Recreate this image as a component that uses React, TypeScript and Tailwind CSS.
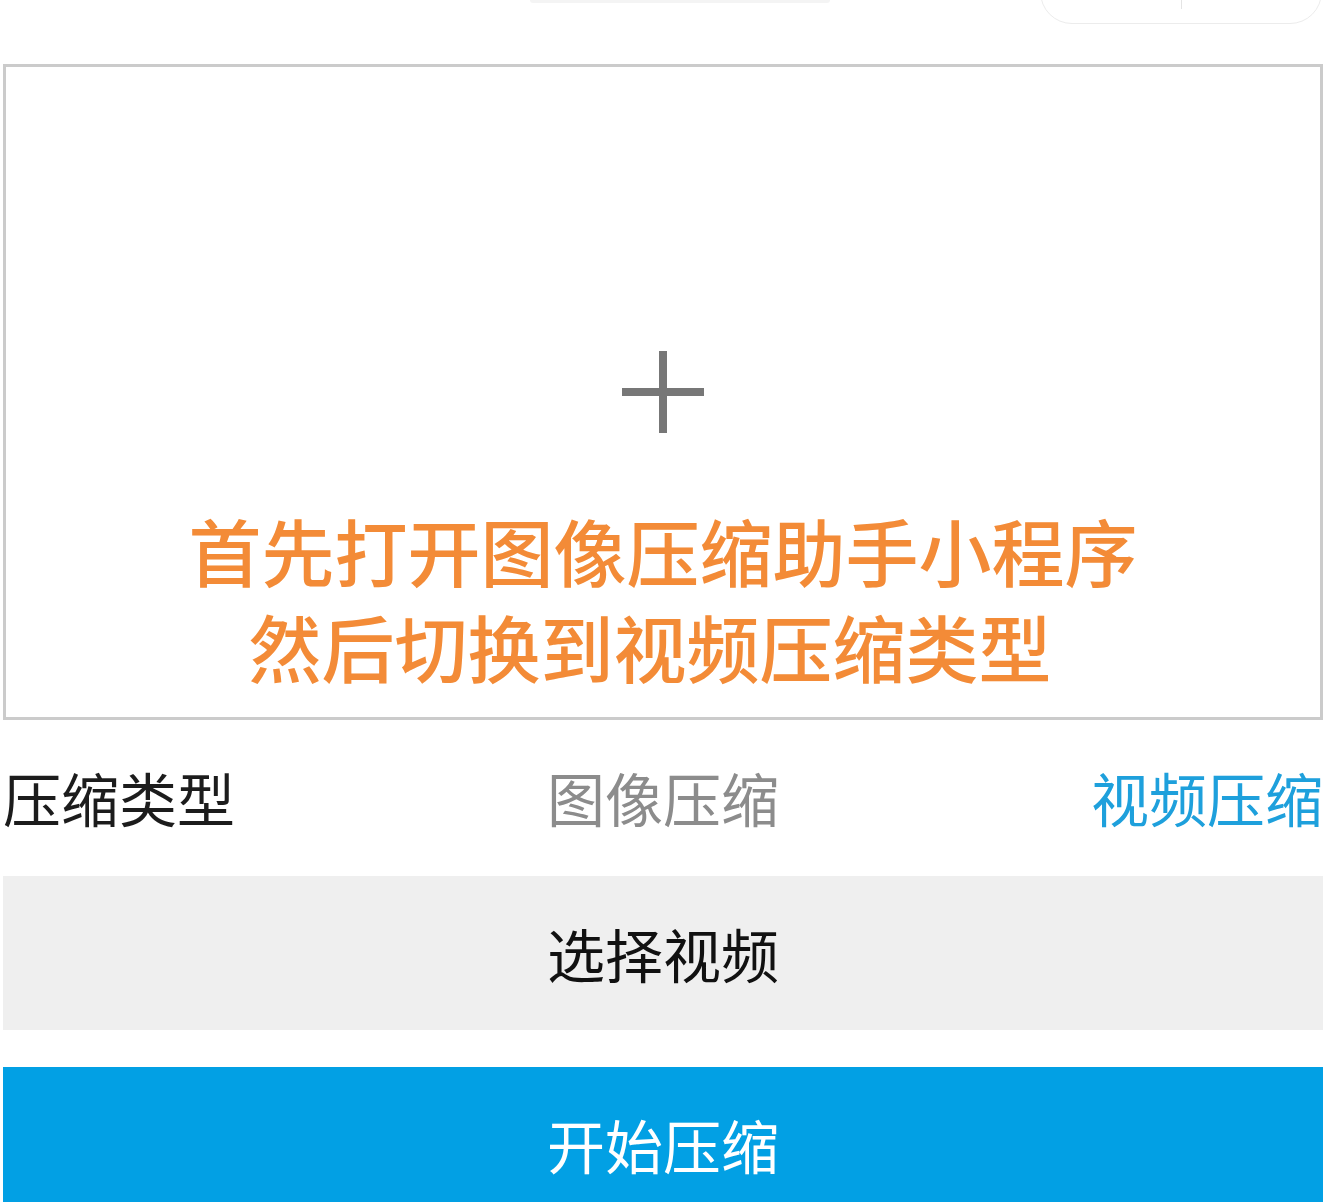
import React, { useState } from 'react';

function PlusIcon() {
  return (
    <svg width="84" height="84" viewBox="0 0 84 84" aria-hidden>
      <rect x="38" y="1" width="8" height="82" fill="#777777" />
      <rect x="1" y="38" width="82" height="8" fill="#777777" />
    </svg>
  );
}

export default function App() {
  const [type, setType] = useState<'image' | 'video'>('video');

  return (
    <div
      className="w-full min-h-screen bg-white overflow-hidden"
      style={{ fontFamily: '"Noto Sans CJK SC", "Noto Sans", sans-serif' }}
    >
      {/* Top bar: remains of the title and the mini-program capsule */}
      <div className="relative h-[64px]">
        <div className="absolute left-[530px] top-0 w-[300px] h-[3px] rounded-b-full bg-[#f4f4f4]" />
        <div className="absolute right-[4px] top-[-40px] w-[282px] h-[64px] rounded-[32px] border border-[#ececec] flex justify-center">
          <div className="w-px h-[48px] bg-[#e4e4e4]" />
        </div>
      </div>

      {/* Upload area */}
      <div className="mx-[3px] h-[656px] border-[3px] border-[#cbcbcb] flex flex-col items-center pt-[283px]">
        <PlusIcon />
        <div className="mt-[67px] flex flex-col items-center text-[73px] leading-[96px] font-medium text-[#f38b37] whitespace-nowrap">
          <div>首先打开图像压缩助手小程序</div>
          <div className="pr-[26px]">然后切换到视频压缩类型</div>
        </div>
      </div>

      {/* Compression type */}
      <div className="h-[156px] px-[3px] flex items-center justify-between text-[58px] leading-none pb-[2px] whitespace-nowrap">
        <span className="text-[#1c1c1c] w-[240px]">压缩类型</span>
        <button
          className={type === 'image' ? 'text-[#1ea0dc]' : 'text-[#8c8c8c]'}
          onClick={() => setType('image')}
        >
          图像压缩
        </button>
        <button
          className={type === 'video' ? 'text-[#1ea0dc] w-[240px] text-right' : 'text-[#8c8c8c] w-[240px] text-right'}
          onClick={() => setType('video')}
        >
          视频压缩
        </button>
      </div>

      {/* Actions */}
      <div className="flex flex-col gap-[37px] px-[3px]">
        <button className="h-[154px] w-full bg-[#efefef] text-[#111111] text-[58px] leading-none">
          选择视频
        </button>
        <button className="h-[154px] w-full bg-[#02a0e4] text-white text-[58px] leading-none">
          开始压缩
        </button>
      </div>
    </div>
  );
}
